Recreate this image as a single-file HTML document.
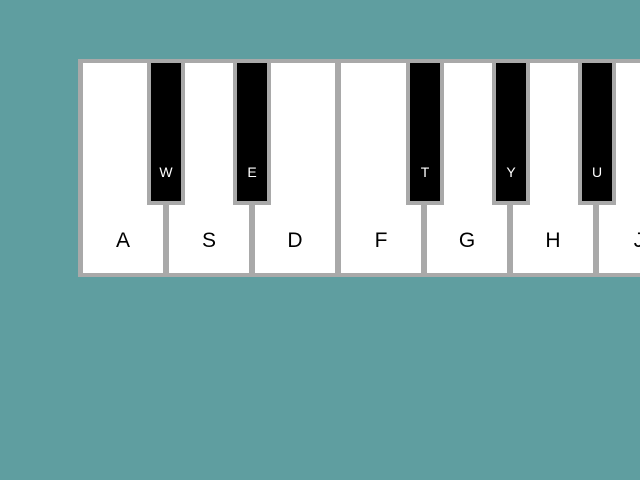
<!DOCTYPE html>
<html><head><style>
body{margin:0;width:640px;height:480px;background:#5f9ea0;position:relative;overflow:hidden;font-family:"Liberation Sans",Arial,sans-serif}
.bg{position:absolute;left:78px;top:59px;width:600px;height:218px;background:#a9a9a9}
.w{position:absolute;top:63px;width:80px;height:210px;background:#fff;font-size:21px;color:#000;text-align:center;line-height:20px}
.w span{position:absolute;left:0;right:0;top:168px}
.b{position:absolute;top:59px;width:30px;height:138px;border:4px solid #a9a9a9;background:#000;color:#fff;font-size:14px;text-align:center;line-height:16px}
.b span{position:absolute;left:0;right:0;top:101px}
</style></head><body>
<div class="bg"></div>
<div class="w" style="left:83px"><span>A</span></div>
<div class="w" style="left:169px"><span>S</span></div>
<div class="w" style="left:255px"><span>D</span></div>
<div class="w" style="left:341px"><span>F</span></div>
<div class="w" style="left:427px"><span>G</span></div>
<div class="w" style="left:513px"><span>H</span></div>
<div class="w" style="left:599px"><span>J</span></div>
<div class="b" style="left:147px"><span>W</span></div>
<div class="b" style="left:233px"><span>E</span></div>
<div class="b" style="left:406px"><span>T</span></div>
<div class="b" style="left:492px"><span>Y</span></div>
<div class="b" style="left:578px"><span>U</span></div>
</body></html>
